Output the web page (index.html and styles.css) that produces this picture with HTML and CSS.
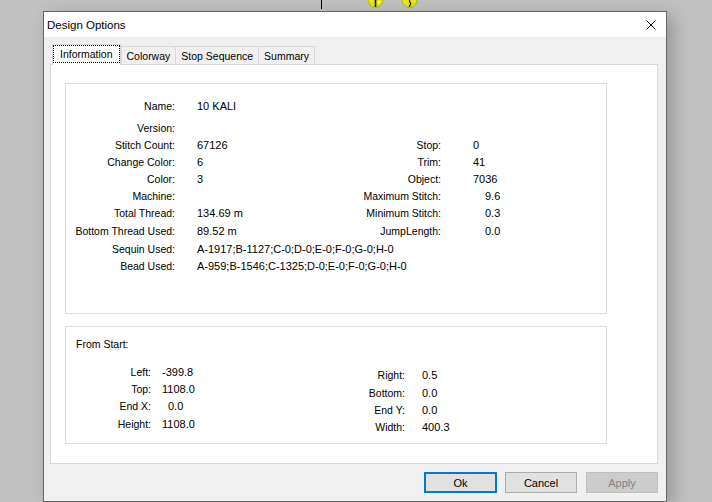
FILE: index.html
```html
<!DOCTYPE html>
<html lang="en">
<head>
<meta charset="utf-8">
<title>Design Options</title>
<link rel="stylesheet" href="styles.css">
</head>
<body>
<div class="desktop">
  <div class="desk-line"></div>
  <svg class="desk-icons" width="54" height="18" viewBox="0 0 54 18">
    <circle cx="9.5" cy="9" r="7.5" fill="#e6e61c" stroke="#b8b800" stroke-width="1"/>
    <path d="M9.5 3 L9.5 16" stroke="#111" stroke-width="1.6"/>
    <path d="M12 12 L14 10" stroke="#fff" stroke-width="1.2"/>
    <circle cx="43.5" cy="9" r="7.5" fill="#e6e61c" stroke="#b8b800" stroke-width="1"/>
    <path d="M43 4 C45 7 42 10 44.5 12 C45.5 13 43 15 43.5 16" stroke="#111" stroke-width="1.2" fill="none"/>
  </svg>

  <div class="dialog">
    <div class="titlebar">
      <span class="title">Design Options</span>
      <svg class="close" width="10" height="10" viewBox="0 0 10 10">
        <path d="M0.5 0.5 L9.5 9.5 M9.5 0.5 L0.5 9.5" stroke="#000" stroke-width="1"/>
      </svg>
    </div>

    <div class="content">
      <div class="tabs">
        <div class="tab active"><span>Information</span></div>
        <div class="tab">Colorway</div>
        <div class="tab">Stop Sequence</div>
        <div class="tab">Summary</div>
      </div>

      <div class="panel">
        <div class="group info">
          <div class="k">Name:</div><div class="v">10 KALI</div>
          <div class="k">Version:</div>
          <div class="k">Stitch Count:</div><div class="v">67126</div>
          <div class="rk">Stop:</div><div class="rv">0</div>
          <div class="k">Change Color:</div><div class="v">6</div>
          <div class="rk">Trim:</div><div class="rv">41</div>
          <div class="k">Color:</div><div class="v">3</div>
          <div class="rk">Object:</div><div class="rv">7036</div>
          <div class="k">Machine:</div>
          <div class="rk">Maximum Stitch:</div><div class="rv num">9.6</div>
          <div class="k">Total Thread:</div><div class="v">134.69 m</div>
          <div class="rk">Minimum Stitch:</div><div class="rv num">0.3</div>
          <div class="k">Bottom Thread Used:</div><div class="v">89.52 m</div>
          <div class="rk">JumpLength:</div><div class="rv num">0.0</div>
          <div class="k">Sequin Used:</div><div class="v wide">A-1917;B-1127;C-0;D-0;E-0;F-0;G-0;H-0</div>
          <div class="k">Bead Used:</div><div class="v wide">A-959;B-1546;C-1325;D-0;E-0;F-0;G-0;H-0</div>
        </div>

        <div class="group start">
          <div class="group-title">From Start:</div>
          <div class="start-cols">
            <div class="pairs left">
              <div class="k">Left:</div><div class="v">-399.8</div>
              <div class="k">Top:</div><div class="v">1108.0</div>
              <div class="k">End X:</div><div class="v shift">0.0</div>
              <div class="k">Height:</div><div class="v">1108.0</div>
            </div>
            <div class="pairs right">
              <div class="k">Right:</div><div class="v">0.5</div>
              <div class="k">Bottom:</div><div class="v">0.0</div>
              <div class="k">End Y:</div><div class="v">0.0</div>
              <div class="k">Width:</div><div class="v">400.3</div>
            </div>
          </div>
        </div>
      </div>

      <div class="actions">
        <button class="btn default">Ok</button>
        <button class="btn">Cancel</button>
        <button class="btn" disabled>Apply</button>
      </div>
    </div>
  </div>
</div>
</body>
</html>
```

FILE: styles.css
```css
* {
  box-sizing: border-box;
}

html, body {
  margin: 0;
  padding: 0;
  overflow: hidden;
}

body {
  font-family: "Liberation Sans", Arial, sans-serif;
  color: #000;
}

.desktop {
  position: relative;
  width: 712px;
  height: 502px;
  background: #c1c1c1;
  overflow: hidden;
}

/* bits of the canvas behind the dialog */
.desk-line {
  position: absolute;
  left: 321px;
  top: 0;
  width: 1px;
  height: 9px;
  background: #000;
}

.desk-icons {
  position: absolute;
  left: 366px;
  top: -9px;
}

/* dialog window */
.dialog {
  position: absolute;
  left: 43px;
  top: 11px;
  width: 624px;
  height: 491px;
  border: 1px solid #666;
  background: #f0f0f0;
  box-shadow: 6px 4px 16px rgba(0, 0, 0, 0.22);
  display: flex;
  flex-direction: column;
}

.titlebar {
  height: 25px;
  flex: none;
  background: #fff;
  display: flex;
  align-items: center;
  justify-content: space-between;
  padding: 0 10px 0 3px;
}

.title {
  font-size: 11.5px;
  line-height: 16px;
}

.close {
  display: block;
}

.content {
  flex: 1;
  padding: 7px 8px 0 6px;
}

/* tab strip */
.tabs {
  display: flex;
  align-items: flex-end;
  height: 20px;
  padding-left: 2px;
  position: relative;
  z-index: 1;
}

.tab {
  height: 18px;
  padding: 1px 5px 0;
  border: 1px solid #d9d9d9;
  border-bottom: none;
  margin-left: -1px;
  background: #f0f0f0;
  font-size: 10.5px;
  line-height: 17px;
  white-space: nowrap;
}

.tab.active {
  height: 21px;
  margin-left: 0;
  margin-bottom: -1px;
  padding: 0;
  background: #fff;
}

.tab.active span {
  display: block;
  height: 18px;
  padding: 0 6px;
  border: 1px dotted #000;
  line-height: 16px;
}

.tab.active + .tab {
  margin-left: 0;
}

/* tab page */
.panel {
  height: 400px;
  border: 1px solid #d9d9d9;
  background: #fff;
  padding: 18px 50px 19px 14px;
}

.group {
  border: 1px solid #dcdcdc;
  background: #fff;
}

.k {
  font-size: 10.5px;
  line-height: 17px;
  text-align: right;
  white-space: nowrap;
}

.v,
.rv {
  font-size: 11px;
  line-height: 17px;
  white-space: nowrap;
}

.info {
  height: 231px;
  padding-top: 14px;
  display: grid;
  grid-template-columns: 109px 165px 101px 1fr;
  grid-template-rows: 22px 17px 17px 17px 17px 17px 18px 18px 17px 17px;
  align-items: start;
}

.info .k { grid-column: 1; }
.info .v { grid-column: 2; padding-left: 22px; }
.info .v.wide { grid-column: 2 / span 3; }
.info .rk {
  grid-column: 3;
  font-size: 10.5px;
  line-height: 17px;
  text-align: right;
  white-space: nowrap;
}
.info .rv { grid-column: 4; padding-left: 32px; }
.info .rv.num { padding-left: 44px; }

.start {
  height: 118px;
  margin-top: 12px;
  padding-top: 9px;
}

.group-title {
  font-size: 10.5px;
  line-height: 17px;
  padding-left: 10px;
}

.start-cols {
  display: flex;
  align-items: flex-start;
}

.pairs {
  display: grid;
  align-items: start;
}

.pairs .v {
  padding-left: 11px;
}

.pairs.left {
  width: 264px;
  margin-top: 11px;
  grid-template-columns: 85px 1fr;
  grid-template-rows: 17px 17px 18px 17px;
}

.pairs.left .v.shift {
  padding-left: 17px;
}

.pairs.right {
  margin-top: 14px;
  grid-template-columns: 75px 1fr;
  grid-template-rows: 18px 17px 17px 17px;
}

.pairs.right .v {
  padding-left: 17px;
}

/* dialog buttons */
.actions {
  display: flex;
  justify-content: flex-end;
  gap: 8px;
  margin-top: 8px;
}

.btn {
  width: 72px;
  height: 21px;
  margin: 0;
  padding: 0;
  border: 1px solid #adadad;
  background: #e1e1e1;
  font-family: "Liberation Sans", Arial, sans-serif;
  font-size: 11px;
  color: #000;
}

.btn.default {
  width: 73px;
  border: 2px solid #0078d7;
}

.btn:disabled {
  margin-left: 1px;
  background: #cccccc;
  border-color: #bfbfbf;
  color: #838383;
}
```
